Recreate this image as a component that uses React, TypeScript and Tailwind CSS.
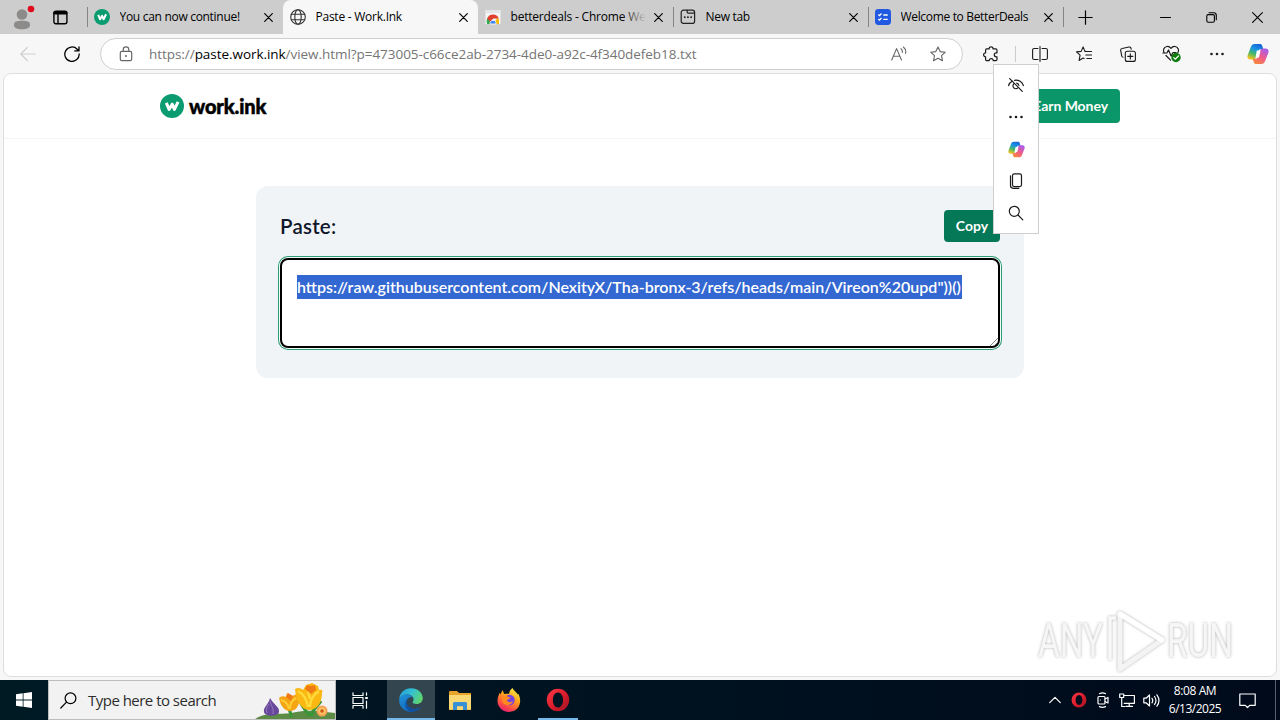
import type { ReactNode } from "react";

type IconProps = { size?: number; className?: string; children: ReactNode; sw?: number; box?: number };

function Icon({ size = 16, className = "", children, sw = 1.1, box = 16 }: IconProps) {
  return (
    <svg
      width={size}
      height={size}
      viewBox={`0 0 ${box} ${box}`}
      fill="none"
      stroke="currentColor"
      strokeWidth={sw}
      strokeLinecap="round"
      strokeLinejoin="round"
      className={`shrink-0 ${className}`}
    >
      {children}
    </svg>
  );
}

const Close = () => (
  <Icon size={9} box={9} sw={1.2}>
    <path d="M.7.7l7.6 7.6M8.300.7L.7 8.300" />
  </Icon>
);

function WorkLogo({ size }: { size: number }) {
  return (
    <svg width={size} height={size} viewBox="0 0 24 24" className="shrink-0">
      <circle cx="12" cy="12" r="12" fill="#0a9b70" />
      <path d="M6.300 8.800l2.800 6.600 3.100-5.200 2.200 5.200 3.700-7.600" fill="none" stroke="#fff" strokeWidth="3" strokeLinejoin="round" strokeLinecap="butt" />
    </svg>
  );
}

const Globe = () => (
  <Icon sw={1.1} className="text-[#333]">
    <circle cx="8" cy="8" r="7.3" />
    <ellipse cx="8" cy="8" rx="3.2" ry="7.3" />
    <path d="M1.3 5.3h13.4M1.3 10.7h13.4" />
  </Icon>
);

const StoreIcon = () => (
  <svg width="16" height="16" viewBox="0 0 16 16" className="shrink-0">
    <path d="M.5 1h15v14h-15z" fill="#f4f5f6" />
    <path d="M.5 1h15v3h-15z" fill="#e3e5e8" />
    <path d="M2 14a6 6 0 0 1 1.4-6.1L6 13v2H2z" fill="#34a853" />
    <path d="M8 15l4.8-6.600A6 6 0 0 1 14 14v1z" fill="#fbbc04" />
    <path d="M2.200 9.500a6.200 6.200 0 0 1 11.600 0H8.200L5.500 13z" fill="#e2402f" />
    <path d="M5.100 15a3 3 0 1 1 5.800 0z" fill="#4285f4" stroke="#fff" strokeWidth=".8" />
  </svg>
);

const NewTabIcon = () => (
  <Icon sw={1.2} className="text-[#222]">
    <rect x="1.2" y="1.2" width="13.4" height="13.2" rx="2.2" />
    <path d="M7.2 1.4v1.700c0 .7.4 1.100 1.100 1.100h6.200" />
    <path d="M4.700 8.200h.1M7.900 8.200h.1M11.100 8.200h.1" strokeWidth="1.800" />
  </Icon>
);

const DealsIcon = () => (
  <svg width="16" height="16" viewBox="0 0 16 16" className="shrink-0" fill="none" stroke="#fff" strokeWidth="1.300">
    <rect width="16" height="16" rx="3.400" fill="#2159e0" stroke="none" />
    <path d="M3.400 5.500l1.100 1.100 2-2.100M3.400 10l1.100 1.100 2-2.100M8.300 6h4.400M8.300 10.300h4.400" />
  </svg>
);

function Tab({ icon, label, active, first, fade, textClass }: { icon: ReactNode; label: string; active?: boolean; first?: boolean; fade?: boolean; textClass: string }) {
  return (
    <div
      className={
        active
          ? "flex h-[34px] w-[195px] shrink-0 items-center rounded-t-[8px] bg-[#f7f7f7] pr-[10.5px] pl-[7px]"
          : first
            ? "flex h-[34px] w-[196px] shrink-0 items-center pr-[10.5px] pl-[7px]"
            : "flex h-[34px] w-[195px] shrink-0 items-center pr-[10.5px] pl-[7px]"
      }
    >
      {icon}
      <span className={`relative ml-[9.500px] flex-1 overflow-hidden text-[12px] leading-[18px] whitespace-nowrap ${textClass}`}>
        {label}
        {fade && <span className="absolute top-0 right-0 h-full w-[24px] bg-linear-to-r from-transparent to-[#cdcdcd]" />}
      </span>
      <span className="ml-[8px]">
        <Close />
      </span>
    </div>
  );
}

const Sep = ({ hidden }: { hidden?: boolean }) => (
  <span className={hidden ? "-mr-px w-px shrink-0" : "-mr-px h-[20px] w-px shrink-0 bg-[#858585]"} />
);

function Copilot({ size, id }: { size: number; id: string }) {
  return (
    <svg width={size} height={size} viewBox="0 0 24 24" className="shrink-0">
      <defs>
        <linearGradient id={`${id}a`} x1="0.7" y1="0" x2="0.3" y2="1">
          <stop offset="0" stopColor="#1762d6" />
          <stop offset=".35" stopColor="#1b93e6" />
          <stop offset=".65" stopColor="#43b86b" />
          <stop offset="1" stopColor="#f2c51d" />
        </linearGradient>
        <linearGradient id={`${id}b`} x1="0.8" y1="0" x2="0.2" y2="1">
          <stop offset="0" stopColor="#a45cf0" />
          <stop offset=".5" stopColor="#ee5a8c" />
          <stop offset="1" stopColor="#fb8a38" />
        </linearGradient>
      </defs>
      <path d="M17.800 6.800L16.600 3C16.200 1.700 15.400 1 14 1H8.500C6.200 1 5 2 4.200 4.300L.8 13c-1 3 .3 4.900 3 4.900h2.800c1.800 0 2.700-.8 3.300-2.600l2.400-6.500c.5-1.400 1.300-2 2.700-2z" fill={`url(#${id}a)`} />
      <path d="M6.200 17.200L7.400 21c.4 1.300 1.200 2 2.600 2h5.500c2.300 0 3.500-1 4.300-3.300l3.400-8.700c1-3-.3-4.900-3-4.900h-2.800c-1.800 0-2.700.8-3.300 2.600l-2.400 6.500c-.5 1.400-1.300 2-2.700 2z" fill={`url(#${id}b)`} />
      <path d="M10.700 8.300h4.100l-1.700 7.400H9.300z" fill="#fff" />
    </svg>
  );
}

function OperaIcon({ size }: { size: number }) {
  return (
    <svg width={size} height={size} viewBox="0 0 24 24" className="shrink-0">
      <defs>
        <linearGradient id="opera" x1="0" y1="0" x2="1" y2="1">
          <stop offset="0" stopColor="#ff3a47" />
          <stop offset=".55" stopColor="#d81b2b" />
          <stop offset="1" stopColor="#9a1324" />
        </linearGradient>
      </defs>
      <path fillRule="evenodd" d="M12 .8a11.200 11.200 0 1 0 0 22.400 11.200 11.200 0 0 0 0-22.400zm0 3.700c3.100 0 5.100 3.400 5.100 7.500s-2 7.500-5.100 7.500-5.100-3.400-5.100-7.500 2-7.500 5.100-7.500z" fill="url(#opera)" />
    </svg>
  );
}

function TabStrip() {
  return (
    <div className="flex h-[34px] items-center bg-[#cdcdcd] text-black">
      <div className="flex w-[44px] justify-center">
        <svg width="26" height="28" viewBox="0 0 26 28">
          <circle cx="13" cy="11.500" r="5.300" fill="#8d8b89" />
          <path d="M5 22c0-3.600 3-4.300 8-4.300s8 .7 8 4.300c0 3-3.400 4.200-8 4.200S5 25 5 22z" fill="#8d8b89" />
          <circle cx="22" cy="6" r="3.300" fill="#e00b1c" />
        </svg>
      </div>
      <div className="flex w-[43px] pl-[9px]">
        <Icon size={15} box={15} sw={1.4}>
          <rect x=".9" y="1.200" width="13" height="12.600" rx="2" />
          <path d="M1 2.500h12.800M1 3.700h12.800M5 4v9.500" />
        </Icon>
      </div>
      <Sep />
      <Tab first icon={<WorkLogo size={16} />} label="You can now continue!" textClass="tracking-[-0.3px]" />
      <Sep hidden />
      <Tab icon={<Globe />} label="Paste - Work.Ink" active textClass="tracking-[-0.25px]" />
      <Sep hidden />
      <Tab icon={<StoreIcon />} label="betterdeals - Chrome We" fade textClass="tracking-[-0.2px]" />
      <Sep />
      <Tab icon={<NewTabIcon />} label="New tab" textClass="tracking-[-0.3px]" />
      <Sep />
      <Tab icon={<DealsIcon />} label="Welcome to BetterDeals" textClass="tracking-[-0.330px]" />
      <Sep />
      <div className="flex w-[45px] justify-center">
        <Icon size={15} box={15} sw={1.2}>
          <path d="M7.500.8v13.400M.8 7.500h13.400" />
        </Icon>
      </div>
      <div className="ml-auto flex">
        <div className="flex w-[46px] justify-center">
          <Icon size={11} box={11}><path d="M.5 5.500h10" /></Icon>
        </div>
        <div className="flex w-[46px] justify-center">
          <Icon size={11} box={11}>
            <rect x=".8" y="2.600" width="7.600" height="7.600" rx="1.500" />
            <path d="M3 .8h4.600c1.800 0 2.700.9 2.700 2.700v4.300" />
          </Icon>
        </div>
        <div className="flex w-[46px] justify-center">
          <Icon size={11} box={11}><path d="M.6.6l9.800 9.800M10.400.6L.6 10.400" /></Icon>
        </div>
      </div>
    </div>
  );
}

const Tool = ({ children }: { children: ReactNode }) => <div className="flex w-[44.25px] shrink-0 justify-center">{children}</div>;

const Dots = () => (
  <svg width="16" height="16" viewBox="0 0 16 16" fill="currentColor">
    <circle cx="2.500" cy="8" r="1.300" />
    <circle cx="8" cy="8" r="1.300" />
    <circle cx="13.500" cy="8" r="1.300" />
  </svg>
);

function Toolbar() {
  return (
    <div className="flex h-[39px] items-center bg-[#f7f7f7] text-[#1b1b1b]">
      <div className="flex w-[56px] justify-center text-[#cfcfcf]">
        <Icon sw={1.2}><path d="M.8 8h14.400M7.300 1.500L.8 8l6.500 6.500" /></Icon>
      </div>
      <div className="flex w-[44px] pl-[8px] text-black">
        <Icon sw={1.3}>
          <path d="M15.200 8A7.200 7.200 0 1 1 13.200 3.200l1.400 1.500M15 .8v4.100h-4.200" />
        </Icon>
      </div>
      <div className="flex h-[32px] w-[863px] items-center rounded-full border border-[#cfcfcf] bg-white pl-[17px] text-[#666]">
        <Icon size={16} sw={1.200}>
          <rect x="2.300" y="5.300" width="11.400" height="9.400" rx="1.600" />
          <path d="M5.200 5.200V3.600a2.800 2.800 0 0 1 5.600 0v1.600" />
          <path d="M8 10h.01" strokeWidth="2" />
        </Icon>
        <span className="ml-[15px] flex-1 text-[13.500px] leading-[20px] tracking-[-0.050px] whitespace-nowrap text-[#757575]">
          https://<span className="text-black">paste.work.ink</span>/view.html?p=473005-c66ce2ab-2734-4de0-a92c-4f340defeb18.txt
        </span>
        <Icon sw={1.100} className="mr-[23px]">
          <path d="M.7 14L5.600 2.600 10.500 14M2.400 10.200h6.400M10 2.600c1.200 1 1.600 2.300 1.300 3.900M12.400 1c2 1.700 2.700 3.900 2.200 6.400" />
        </Icon>
        <Icon className="mr-[16px]" sw={1.100}>
          <path d="M8 .9l2.200 4.700 5.100.6-3.800 3.500 1 5.100L8 12.300l-4.500 2.500 1-5.100L.7 6.200l5.100-.6z" />
        </Icon>
      </div>
      <div className="ml-[6px] flex w-[44px] justify-center">
        <Icon sw={1.200}>
          <path d="M3.600 2.900h2.500a2 2 0 0 1 4 0h2.600c.8 0 1.300.5 1.300 1.300v2.600h-.7a2 2 0 0 0 0 4h.7v2.500c0 .8-.5 1.300-1.300 1.300h-2.500a2 2 0 0 0-4 0H3.900c-.8 0-1.300-.5-1.300-1.300v-2.500a2 2 0 0 1 0-4V4.200c0-.8.3-1.300 1-1.300z" />
        </Icon>
      </div>
      <span className="mr-[1.500px] ml-[2px] h-[16px] w-px bg-[#ccc]" />
      <Tool>
        <Icon>
          <path d="M8 .5v15M6 2.500H2.200C1.200 2.500.6 3.100.6 4v8c0 .9.600 1.500 1.600 1.500H6M10 2.500h3.800c1 0 1.600.6 1.600 1.500v8c0 .9-.6 1.500-1.600 1.500H10" />
        </Icon>
      </Tool>
      <Tool>
        <Icon>
          <path d="M10 5.400H8.900L7.100.9 5.200 5.400l-4.700.5 3.600 3.300-1 5.200 4-2.300 1 .5M10.300 5.500h5.200M9.800 9h5.700M10.800 12.500h4.700" />
        </Icon>
      </Tool>
      <Tool>
        <Icon>
          <rect x="5.300" y="5.300" width="10.100" height="10.100" rx="2" />
          <path d="M3.100 11.200c-.8-.1-1.300-.6-1.400-1.400L.7 4.600C.5 3.500 1 2.700 2.100 2.500L9 1c1-.2 1.800.3 2 1.300l.2.800M10.350 7.700v5.200M7.700 10.350h5.200" />
        </Icon>
      </Tool>
      <Tool>
        <svg width="20" height="18" viewBox="0 0 20 18" fill="none" stroke="currentColor" strokeWidth="1.200" strokeLinejoin="round" strokeLinecap="round">
          <path d="M2.300 8C.6 5.500 1.600 2 4.900 1.500 6.600 1.300 8 2 9 3.300c1-1.300 2.400-2 4.100-1.800 3.300.5 4.300 4 2.600 6.500M4 10.500l4.500 4.600M.9 8h4l1.600-3 2.600 6L11 7.500h3" />
          <circle cx="14" cy="12.500" r="4.700" fill="#107c10" stroke="none" />
          <path d="M11.700 12.600l1.700 1.600 3-3.200" stroke="#fff" />
        </svg>
      </Tool>
      <Tool>
        <Dots />
      </Tool>
      <div className="flex w-[39px] justify-center">
        <Copilot size={22} id="top" />
      </div>
    </div>
  );
}

function Page() {
  return (
    <main className="relative mx-[3px] h-[604px] overflow-hidden rounded-[8px] border border-[#dedede] bg-white font-[Lato,sans-serif]">
      <header className="flex h-[65px] items-center justify-between border-b border-[#f5f5f5] px-[156px]">
        <div className="flex items-center gap-[5px]">
          <WorkLogo size={24} />
          <span className="text-[20px] leading-[24px] font-black tracking-[-0.1px] text-black [-webkit-text-stroke:0.5px_black]">work.ink</span>
        </div>
        <div className="flex h-[34px] items-center rounded-[4px] bg-[#0a9668] px-[12px] pb-px text-[14px] font-bold tracking-[-0.05px] whitespace-nowrap text-white">
          Earn Money
        </div>
      </header>
      <section className="mx-auto mt-[47px] h-[192px] w-[768px] rounded-[12px] bg-[#f1f4f6] p-[24px]">
        <div className="flex h-[32px] items-center justify-between">
          <h1 className="text-[20.500px] leading-[28px] font-semibold tracking-[0.25px] text-[#0f172a]">Paste:</h1>
          <div className="flex h-[32px] w-[56px] items-center justify-center rounded-[4px] bg-[#047857] pb-px text-[14px] font-bold text-white">Copy</div>
        </div>
        <div className="relative mt-[16px] h-[90px] rounded-[8px] border-2 border-black bg-white pt-[15px] pl-[15px] shadow-[0_0_0_1px_#f0fbf6,0_0_0_2px_#2f9b77]">
          <span className="inline-block h-[24px] w-[665px] bg-[#3367d1] text-[16px] leading-[24px] font-semibold tracking-[0px] whitespace-nowrap text-white">
            {'https://raw.githubusercontent.com/NexityX/Tha-bronx-3/refs/heads/main/Vireon%20upd"))()'}
          </span>
          <svg width="8" height="8" viewBox="0 0 8 8" className="absolute right-0 bottom-0" stroke="#777" strokeWidth=".9">
            <path d="M0 8l8-8M4 8l4-4" />
          </svg>
        </div>
      </section>
      <svg width="204" height="68" viewBox="0 0 204 68" className="absolute right-[36px] bottom-[2px] overflow-visible drop-shadow-[0_0_1.5px_rgba(0,0,0,0.3)]">
        <g fill="#f6f6f6" fontFamily="Roboto, sans-serif" fontSize="49" fontWeight="400">
          <text x="2" y="51" textLength="65" lengthAdjust="spacingAndGlyphs">ANY</text>
          <text x="131" y="51" textLength="66" lengthAdjust="spacingAndGlyphs">RUN</text>
        </g>
        <path d="M84 8l42 26-42 29z" fill="none" stroke="#f4f4f4" strokeWidth="5" strokeLinejoin="round" />
        <path d="M84 8l42 26" fill="none" stroke="#fff" strokeWidth="5" strokeLinecap="round" />
        <path d="M80 12h-6v42" fill="none" stroke="#f8f8f8" strokeWidth="3.500" />
      </svg>
    </main>
  );
}

function MiniMenu() {
  return (
    <aside className="absolute top-[64px] left-[993px] flex h-[170px] w-[46px] flex-col items-center border border-[#cfcfcf] bg-white pt-[4px] text-[#1a1a1a]">
      <div className="flex h-[32px] items-center">
        <Icon sw={1.200}>
          <path d="M1.700 1.700l12.600 12.600M.6 8.600C1.200 6.500 2.600 4.900 4.500 4M6.600 3.300c4-.6 7.800 1.600 8.800 5.300M6.100 6.500a2.900 2.900 0 1 0 4.100 4M8.700 6.200a3 3 0 0 1 2.200 2.300" />
        </Icon>
      </div>
      <div className="flex h-[32px] items-center"><Dots /></div>
      <div className="flex h-[32px] items-center"><Copilot size={17} id="mini" /></div>
      <div className="flex h-[32px] items-center">
        <Icon sw={1.200}>
          <rect x="4.500" y=".9" width="9" height="12.700" rx="1.800" />
          <path d="M2.500 2.800v9.800c0 1.800.9 2.700 2.700 2.700h5.600" />
        </Icon>
      </div>
      <div className="flex h-[32px] items-center">
        <Icon sw={1.200}>
          <circle cx="6.300" cy="6.300" r="5" />
          <path d="M10 10l4.800 4.800" />
        </Icon>
      </div>
    </aside>
  );
}

function Flowers() {
  return (
    <svg width="80" height="37" viewBox="0 0 80 37" className="shrink-0 self-end">
      <path d="M0 37C12 29 25 33 36 31c18-4 28-2 44 0v6z" fill="#5b8b45" />
      <path d="M36 35c0-6-3-8-2-12M55 34c-6-7-9-12-10-15M56 34c2-8 7-10 10-15" fill="none" stroke="#389638" strokeWidth="3.200" />
      <path d="M15 16c3 6 10 9 9 14-1 5-14 5-15 0-1-5 5-8 6-14z" fill="#68489a" />
      <path d="M15 19c1 5 4 7 3 13M14 22c-3 4-3 6-2 9" stroke="#9b7ac5" fill="none" />
      <path d="M24 16c2-2 5-2 7-1l1-4 5 3 5-2v5l2 2c0 6-4 10-9 10-5 0-9-5-10-9z" fill="#f5a413" />
      <path d="M26 18c5 1 7 4 8 9M41 16c-4 2-6 6-6 11" fill="none" stroke="#ffcd34" strokeWidth="2" />
      <path d="M31 15l2-4 5 3-2 5z" fill="#ef7a14" />
      <path d="M40 7c3-2 6-1 8 1l3-5 6-2 6 3 1 4c3-1 4 0 3 3 0 10-5 17-13 17-8 0-13-10-14-21z" fill="#fbb812" />
      <path d="M43 9c7 4 9 9 10 16M64 9c-6 4-9 9-9 16M53 9l2 8" fill="none" stroke="#ffdb3b" strokeWidth="2.500" />
      <path d="M50 7l2-4 4 1 4-1 1 5-5 4z" fill="#ef7a14" />
      <circle cx="67" cy="29" r="5.500" fill="#f5a34d" />
      <circle cx="67" cy="29" r="3.500" fill="#ffc46b" />
      <circle cx="67" cy="29" r="1.800" fill="#c95811" />
    </svg>
  );
}

function EdgeIcon() {
  return (
    <svg width="24" height="24" viewBox="0 0 24 24">
      <defs>
        <linearGradient id="edgeTop" x1="0" y1=".2" x2="1" y2=".6">
          <stop offset="0" stopColor="#23a0df" />
          <stop offset=".5" stopColor="#35c1cf" />
          <stop offset="1" stopColor="#5fd66a" />
        </linearGradient>
        <linearGradient id="edgeBody" x1="0" y1="0" x2=".7" y2="1">
          <stop offset="0" stopColor="#2195dc" />
          <stop offset="1" stopColor="#1060b4" />
        </linearGradient>
      </defs>
      <path d="M.2 11C.8 4.700 5.500.2 12 .2 19 .2 23.800 5.200 23.800 10c0 3.800-2.900 6-6.100 6-2.500 0-4.100-.8-4.100-1.700 0-.7 1-1.100 1-3C14.600 8.500 11.700 6.600 8 6.600c-3.400 0-6 1.700-7.800 4.400z" fill="url(#edgeTop)" />
      <path d="M.2 12C.8 8.600 4 6.300 8 6.500c3 .1 5.200 1.500 6 3.100-1-.6-2-.7-3-.4-3.300 1-3.900 4.200-2.900 7.100 1.200 3.600 5 5.400 8.700 4.700 2-.4 3.600-1.300 5.100-2-2 3-5.600 4.900-9.900 4.900C5.500 23.900-.3 18.700.2 12z" fill="url(#edgeBody)" />
      <path d="M9.400 9.900c-2.600 3-1.400 7 1 9.200 2.800 2.500 7.800 2.100 11.300-.1-2 3-5.600 4.900-9.900 4.900C6 22 4 14 9.400 9.900z" fill="#104a99" opacity=".75" />
    </svg>
  );
}

function FirefoxIcon() {
  return (
    <svg width="24" height="24" viewBox="0 0 24 24">
      <defs>
        <linearGradient id="fox" x1=".8" y1="0" x2=".3" y2="1">
          <stop offset="0" stopColor="#fff04a" />
          <stop offset=".4" stopColor="#ffa61c" />
          <stop offset=".75" stopColor="#ff5142" />
          <stop offset="1" stopColor="#e51c72" />
        </linearGradient>
      </defs>
      <path d="M15.500 0c1 2.500 3.400 3.700 5.200 6.200l.8-.2c4.200 8.500.2 17.900-9.500 17.900C4.800 23.900.4 18.300.5 12.500.6 9 2 6.500 3 4.500l.6 2L5.500 2l1.700 4c2 0 4-.5 5 0C12 3.500 13.500 1.500 15.500 0z" fill="url(#fox)" />
      <circle cx="12.500" cy="12" r="5.200" fill="#7542e5" />
      <path d="M5.800 8.500c2-1.300 4-.8 5.600.4l2.300.6c-.3 1.800-3.400 1.400-3.600 3 .5 1.700 4 2.500 5.700.3-.3 4-6.300 6-9.700 2.200-1.400-2-1.500-4.500-.3-6.500z" fill="#ff8b20" />
    </svg>
  );
}

function Taskbar() {
  return (
    <footer className="flex h-[40px] bg-linear-to-r from-[#001a24] to-[#000a1b] text-white">
      <div className="flex w-[48px] items-center justify-center">
        <svg width="16" height="16" viewBox="0 0 16 16" fill="#fff">
          <path d="M0 2.300L6.700 1.300v6.300H0zM7.500 1.200L16 0v7.600H7.500zM0 8.400h6.700v6.400L0 13.800zM7.500 8.400H16V16l-8.500-1.200z" />
        </svg>
      </div>
      <div className="flex w-[288px] items-center border border-[#bdbdbd] bg-[#f2f2f2] pl-[11px] text-[#2d2d2d]">
        <Icon size={17} box={17} sw={1.200} className="text-black">
          <circle cx="10.500" cy="6.300" r="5.400" />
          <path d="M6.500 10.200L.8 16" />
        </Icon>
        <span className="ml-[11px] flex-1 text-[15px] leading-[20px] tracking-[-0.52px] whitespace-nowrap">Type here to search</span>
        <Flowers />
      </div>
      <div className="flex w-[51px] items-center justify-center pr-[3px]">
        <Icon size={17} box={17} sw={1.200}>
          <path d="M1 .8v2.700h10V.8M1 16.200v-2.700h10v2.700M1 5.500h10v6H1zM14.500.8v2.400M14.500 9v7.200" />
          <path d="M14.500 5v2" strokeWidth="2.600" strokeLinecap="butt" />
        </Icon>
      </div>
      <div className="flex w-[48px] items-center justify-center border-b-2 border-[#76b9ed] bg-[#33464f] pt-[2px]"><EdgeIcon /></div>
      <div className="flex w-[49px] items-center justify-center">
        <svg width="22" height="19" viewBox="0 0 22 19">
          <path d="M0 1.500C0 .5.500 0 1.500 0H8l2 2h12v17H0z" fill="#e9a52b" />
          <path d="M0 4h22v14.500H0z" fill="#fad873" />
          <path d="M4 19v-6.500c0-1 .6-1.600 1.600-1.600h10.800c1 0 1.600.6 1.600 1.600V19h-4v-3.500H8V19z" fill="#3590d5" />
          <path d="M8 15.500h6V19H8z" fill="#fad873" />
        </svg>
      </div>
      <div className="flex w-[49px] items-center justify-center"><FirefoxIcon /></div>
      <div className="ml-[5px] flex w-[40px] items-center justify-center border-b-2 border-[#76b9ed] pt-[2px]"><OperaIcon size={24} /></div>
      <div className="ml-auto flex items-center">
        <div className="flex w-[24px] justify-center">
          <Icon size={12} box={12} sw={1.200}><path d="M.7 8.600L6 3.300l5.300 5.300" /></Icon>
        </div>
        <div className="flex w-[24px] justify-center"><OperaIcon size={16} /></div>
        <div className="flex w-[24px] justify-center">
          <Icon sw={1.200}>
            <rect x="3" y="4.500" width="7" height="7.500" rx="1" />
            <path d="M10 7l3-1.500v5.500l-3-1.500M4.500 1.700c2-1 4-1 6 0M4.500 14.600c2 1 4 1 6 0M5.300 8h.1" />
          </Icon>
        </div>
        <div className="flex w-[24px] justify-center">
          <Icon sw={1.200}>
            <path d="M5 3.500h10.400v7.800H5.200M10.200 11.500v2.800M7 14.400h6.500M.7 2h4v3.500h-4zM2.700 5.500v9h3" />
          </Icon>
        </div>
        <div className="flex w-[24px] justify-center">
          <Icon size={17} box={17} sw={1.200}>
            <path d="M.8 6.200h2.300L6.500 3v11l-3.400-3.200H.8zM9 6.300c1 1.500 1 3 0 4.500M11.500 4.500c2 2.700 2 5.300 0 8M13.900 2.800c2.700 3.700 2.700 7.700 0 11.400" />
          </Icon>
        </div>
        <div className="flex w-[64px] flex-col items-center text-[12px] leading-[18px] whitespace-nowrap">
          <span className="tracking-[-0.4px]">8:08 AM</span>
          <span className="tracking-[-0.5px]">6/13/2025</span>
        </div>
        <div className="flex w-[40px] justify-center">
          <Icon size={17} box={17} sw={1.200}><path d="M.8 2h15.400v11.300h-5.500l-2.200 2.200-2.200-2.200H.8z" /></Icon>
        </div>
        <span className="mr-[4px] ml-[8px] h-[40px] w-px bg-[#536070]" />
      </div>
    </footer>
  );
}

export default function App() {
  return (
    <div className="relative flex h-[720px] w-[1280px] flex-col overflow-hidden bg-[#f7f7f7] font-['Open_Sans','Noto_Sans',sans-serif]">
      <TabStrip />
      <Toolbar />
      <Page />
      <div className="h-[3px]" />
      <Taskbar />
      <MiniMenu />
    </div>
  );
}
